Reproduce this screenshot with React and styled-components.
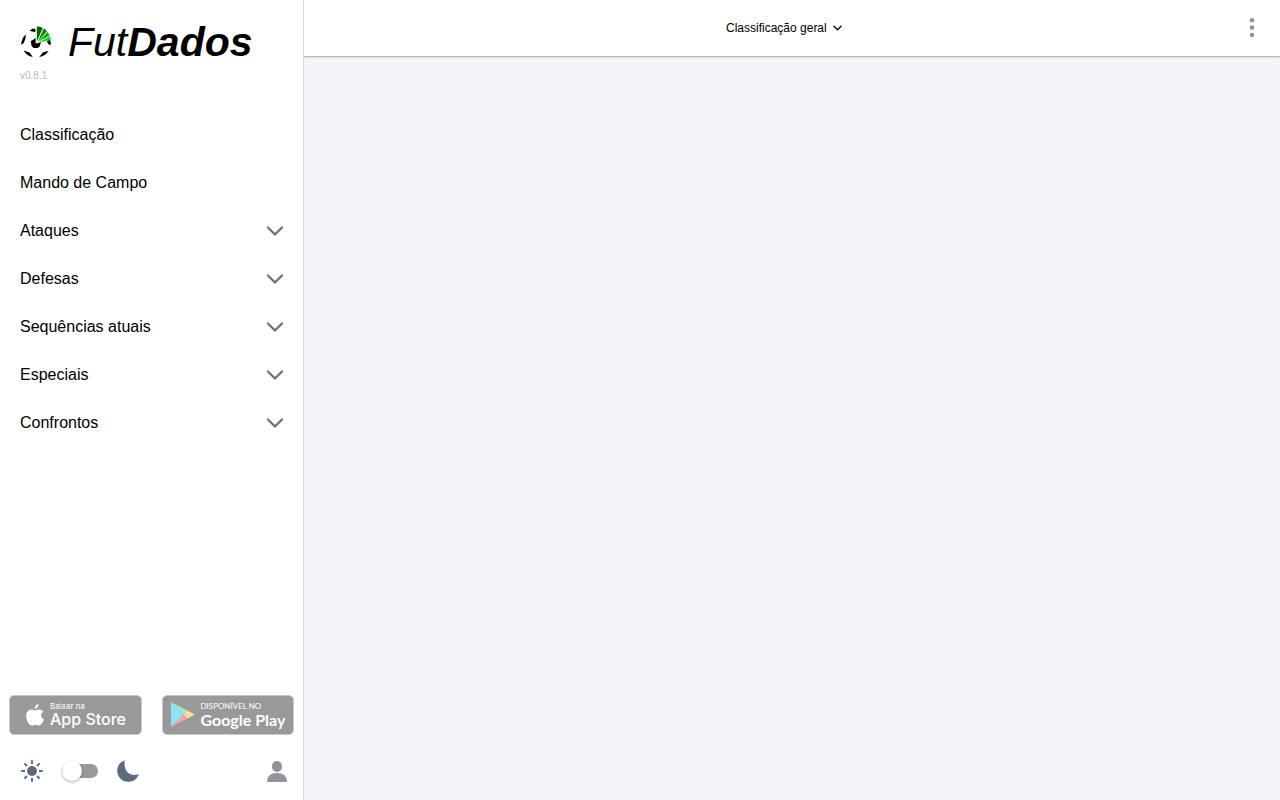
import React, { useState } from "react";
import styled, { createGlobalStyle } from "styled-components";

const GlobalStyle = createGlobalStyle`
  * {
    box-sizing: border-box;
  }

  body {
    margin: 0;
    background-color: #f3f5f9;
    color: #000;
    font-family: "Liberation Sans", Arial, sans-serif;
    font-size: 16px;
  }

  a {
    color: inherit;
    text-decoration: none;
  }

  button {
    padding: 0;
    border: none;
    background: none;
    color: inherit;
    font: inherit;
    cursor: pointer;
  }

  svg {
    display: block;
    flex-shrink: 0;
  }
`;

const Page = styled.div`
  display: grid;
  grid-template-columns: 304px 1fr;
  min-height: 100vh;
`;

const Sidebar = styled.aside`
  z-index: 1;
  display: flex;
  flex-direction: column;
  background-color: #fff;
  border-right: 1px solid #d8d9de;
`;

const Brand = styled.header`
  padding: 20px 20px 28px;
`;

const BrandRow = styled.div`
  display: flex;
  align-items: center;
  gap: 16px;
  height: 44px;
`;

const BrandName = styled.h1`
  margin: 0;
  font-size: 41px;
  font-style: italic;
  font-weight: 400;
  line-height: 44px;
`;

const Version = styled.p`
  margin: 5px 0 0;
  color: #bbb;
  font-size: 10px;
  line-height: 14px;
`;

const Menu = styled.nav`
  flex: 1;
`;

const MenuItem = styled.a`
  display: flex;
  align-items: center;
  justify-content: space-between;
  width: 100%;
  height: 48px;
  padding: 0 19px 0 20px;

  svg {
    color: #737373;
  }
`;

const Stores = styled.div`
  display: grid;
  grid-template-columns: 1fr 1fr;
  gap: 20px;
  padding: 0 9px;
`;

const StoreBadge = styled.a`
  display: flex;
  align-items: center;
  gap: ${(p) => p.$gap};
  height: 40px;
  padding-left: ${(p) => p.$pad};
  border: 1px solid #c8c8c8;
  border-radius: 5px;
  background-color: #999;
  color: #fff;
  font-family: ${(p) => p.$font}, sans-serif;
  white-space: nowrap;
`;

const StoreText = styled.span`
  display: flex;
  flex-direction: column;
`;

const StoreHint = styled.span`
  font-size: 8px;
  line-height: 9px;
`;

const StoreName = styled.span`
  font-size: 16px;
  font-weight: ${(p) => p.$weight};
  line-height: 17px;
`;

const Settings = styled.div`
  display: flex;
  align-items: center;
  height: 56px;
  margin: 8px 0 1px;
  padding: 0 14px 0 20px;
  color: #5d6b7e;
`;

const ThemeToggle = styled.div`
  display: flex;
  align-items: center;
  flex: 1;
  gap: 18px;
`;

const Switch = styled.input`
  position: relative;
  width: 36px;
  height: 14px;
  margin: 0;
  appearance: none;
  border-radius: 7px;
  background-color: #999;
  cursor: pointer;

  &::before {
    content: "";
    position: absolute;
    top: -3px;
    left: 0;
    width: 20px;
    height: 20px;
    border-radius: 50%;
    background-color: #fff;
    box-shadow: 0 2px 3px rgba(0, 0, 0, 0.2), 0 0 2px rgba(0, 0, 0, 0.15);
    transition: left 0.15s;
  }

  &:checked::before {
    left: 16px;
  }
`;

const ProfileButton = styled.button`
  color: #92949c;
`;

const Toolbar = styled.header`
  display: grid;
  grid-template-columns: 40px 1fr 56px;
  align-items: center;
  height: 56px;
  background-color: #fff;
  box-shadow: 0 1px 3px rgba(0, 0, 0, 0.16), 0 1px 1px rgba(0, 0, 0, 0.16);
`;

const TableSelect = styled.div`
  grid-column: 2;
  display: flex;
  align-items: center;
  justify-content: center;
  gap: 5px;

  select {
    appearance: none;
    padding: 0;
    border: none;
    background: none;
    color: #000;
    font: 12px/16px "Liberation Sans", Arial, sans-serif;
  }
`;

const OptionsButton = styled.button`
  justify-self: center;
  color: #92949c;
`;

const Ball = () => (
  <svg width="32" height="32" viewBox="0 0 32 32" aria-hidden="true">
    <g fill="#000">
      <path d="M9.6 4.6 12.6 2.7H15.4V6L12 5.6Z" />
      <path d="M10.8 15.2 15.6 12V17.6L21 16.2 19.6 20.6 17.8 22H13.6L11.6 20Z" />
      <path d="M5.6 8.6Q1.4 12.8 1.2 18.7L3.8 17 5.6 12Z" />
      <path d="M26.8 15 30 13.8Q31.2 16.4 30.3 19.6L28 17.6Z" />
      <path d="M3.6 24.6 9.6 26.6 12.8 31Q6.8 30.4 3.6 24.6Z" />
      <path d="M28.6 24.8 22.8 26.6 19.2 31Q25.4 30.2 28.6 24.8Z" />
    </g>
    <path d="M16.8 15.4V0.6Q20.1.5 22.8 2Z" fill="#006400" />
    <path d="M17.8 15.4 23.8 2.6Q26 3.8 27 5.2Z" fill="#008a00" />
    <path d="M18.2 15.8 27.5 6Q29 7.8 29.6 9.4Z" fill="#00b400" />
    <path d="M18.4 16.4 29.8 10.2 31 13.8Z" fill="#00e010" />
  </svg>
);

const Chevron = ({ size, stroke }) => (
  <svg
    width={size}
    height={size}
    viewBox="0 0 20 20"
    fill="none"
    stroke="currentColor"
    strokeWidth={stroke}
    strokeLinecap="round"
    strokeLinejoin="round"
    aria-hidden="true"
  >
    <path d="M4 6.5 11 13.5 18 6.5" />
  </svg>
);

const Apple = () => (
  <svg width="18" height="22" viewBox="0 0 18 22" aria-hidden="true">
    <path
      d="M12.5 0Q12.7 2 11.5 3.4T8.7 4.9Q8.5 3 9.8 1.6T12.5 0ZM17.3 7.5Q14.9 9 15 11.4 15.1 14.2 18 15.4 17.2 17.7 15.6 19.8 14.3 21.5 12.8 21.5C11.5 21.5 11 20.7 9.3 20.7S7.1 21.5 5.9 21.6C3 21.7.2 16.7.2 12.3.2 8.1 2.7 5.7 5.3 5.6 6.9 5.5 8.2 6.6 9.1 6.6S11.4 5.4 13.3 5.5Q15.8 5.6 17.3 7.5Z"
      fill="#fff"
    />
  </svg>
);

const Play = () => (
  <svg width="24" height="26" viewBox="0 0 24 26" aria-hidden="true">
    <path d="M0 0V25L12.5 12.5Z" fill="#8ae6f5" />
    <path d="M0 0 16.5 8.5 12.5 12.5Z" fill="#99edc3" />
    <path d="M0 25 16.5 16.5 12.5 12.5Z" fill="#f3a5ad" />
    <path d="M16.5 8.5 22.6 11.7Q23.4 12.5 22.6 13.3L16.5 16.5 12.5 12.5Z" fill="#ffdd91" />
  </svg>
);

const Sun = () => (
  <svg width="24" height="24" viewBox="0 0 24 24" aria-hidden="true">
    <circle cx="12" cy="12" r="5" fill="currentColor" />
    <path
      d="M12 1.2V5M12 19V22.8M1.2 12H5M19 12H22.8M4.4 4.4 7 7M17 17 19.6 19.6M4.4 19.6 7 17M17 7 19.6 4.4"
      stroke="currentColor"
      strokeWidth="2"
    />
  </svg>
);

const Moon = () => (
  <svg width="24" height="24" viewBox="0 0 24 24" aria-hidden="true">
    <path
      d="M8.7 1.2C7.6 8 10 15.8 18 15.9Q20.8 15.9 22.7 14.9C21.4 19.8 17.3 22.8 12.3 22.8 6.1 22.8 1.2 17.9 1.2 11.8 1.2 7 4.1 3 8.7 1.2Z"
      fill="currentColor"
    />
  </svg>
);

const Person = () => (
  <svg width="24" height="24" viewBox="0 0 24 24" aria-hidden="true">
    <rect x="7" y="2" width="10" height="11" rx="5" fill="currentColor" />
    <path d="M2 23Q2 14 12 14T22 23Z" fill="currentColor" />
  </svg>
);

const Dots = () => (
  <svg width="24" height="24" viewBox="0 0 24 24" fill="currentColor" aria-hidden="true">
    <circle cx="12" cy="4.2" r="2.3" />
    <circle cx="12" cy="11.6" r="2.3" />
    <circle cx="12" cy="19" r="2.3" />
  </svg>
);

const links = ["Classificação", "Mando de Campo"];
const groups = ["Ataques", "Defesas", "Sequências atuais", "Especiais", "Confrontos"];

export default function App() {
  const [dark, setDark] = useState(false);

  return (
    <Page>
      <GlobalStyle />
      <Sidebar>
        <Brand>
          <BrandRow>
            <Ball />
            <BrandName>
              Fut<b>Dados</b>
            </BrandName>
          </BrandRow>
          <Version>v0.8.1</Version>
        </Brand>
        <Menu>
          {links.map((label) => (
            <MenuItem key={label} href="#">
              {label}
            </MenuItem>
          ))}
          {groups.map((label) => (
            <MenuItem key={label} as="button" type="button" aria-expanded="false">
              {label}
              <Chevron size={20} stroke={2.4} />
            </MenuItem>
          ))}
        </Menu>
        <Stores>
          <StoreBadge href="#" $gap="6px" $pad="16px" $font="Inter">
            <Apple />
            <StoreText>
              <StoreHint>Baixar na</StoreHint>
              <StoreName $weight={500}>App Store</StoreName>
            </StoreText>
          </StoreBadge>
          <StoreBadge href="#" $gap="6px" $pad="8px" $font="Lato">
            <Play />
            <StoreText>
              <StoreHint>DISPONÍVEL NO</StoreHint>
              <StoreName $weight={700}>Google Play</StoreName>
            </StoreText>
          </StoreBadge>
        </Stores>
        <Settings>
          <ThemeToggle>
            <Sun />
            <Switch
              type="checkbox"
              role="switch"
              aria-label="Modo escuro"
              checked={dark}
              onChange={(e) => setDark(e.target.checked)}
            />
            <Moon />
          </ThemeToggle>
          <ProfileButton type="button" aria-label="Perfil">
            <Person />
          </ProfileButton>
        </Settings>
      </Sidebar>
      <main>
        <Toolbar>
          <TableSelect>
            <select aria-label="Classificação">
              <option>Classificação geral</option>
            </select>
            <Chevron size={10} stroke={2.6} />
          </TableSelect>
          <OptionsButton type="button" aria-label="Opções">
            <Dots />
          </OptionsButton>
        </Toolbar>
      </main>
    </Page>
  );
}
